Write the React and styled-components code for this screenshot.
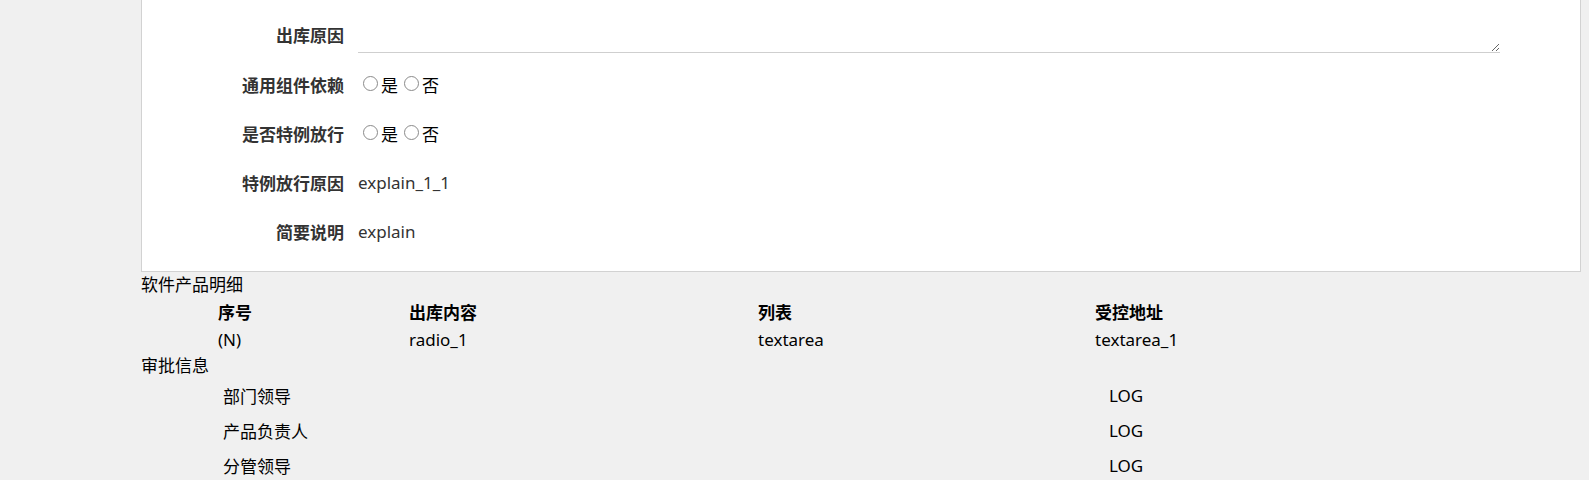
import styled, { createGlobalStyle } from "styled-components";

const GlobalStyle = createGlobalStyle`
  body {
    margin: 0;
    background: #f0f0f0;
    font-family: "Noto Sans", "Noto Sans CJK SC", sans-serif;
    font-size: 17px;
    color: #000;
  }
`;

const formRows = [
  { label: "通用组件依赖", type: "radio", name: "common" },
  { label: "是否特例放行", type: "radio", name: "special" },
  { label: "特例放行原因", type: "text", value: "explain_1_1" },
  { label: "简要说明", type: "text", value: "explain" },
];

const products = [{ no: "(N)", content: "radio_1", list: "textarea", addr: "textarea_1" }];

const approvals = ["部门领导", "产品负责人", "分管领导"];

function App() {
  return (
    <>
      <GlobalStyle />
      <Page>
        <Card>
          <Row $h={52}>
            <Label>出库原因</Label>
            <Reason />
          </Row>
          {formRows.map((r) => (
            <Row key={r.label} $h={49}>
              <Label>{r.label}</Label>
              {r.type === "radio" ? (
                <Radios>
                  <RadioItem>
                    <Radio type="radio" name={r.name} />是
                  </RadioItem>
                  <RadioItem>
                    <Radio type="radio" name={r.name} />否
                  </RadioItem>
                </Radios>
              ) : (
                <Value>{r.value}</Value>
              )}
            </Row>
          ))}
        </Card>

        <SectionTitle>软件产品明细</SectionTitle>
        <Table>
          <HeadCell>序号</HeadCell>
          <HeadCell>出库内容</HeadCell>
          <HeadCell>列表</HeadCell>
          <HeadCell>受控地址</HeadCell>
          {products.map((p) => [
            <Cell key="no">{p.no}</Cell>,
            <Cell key="c">{p.content}</Cell>,
            <Cell key="l">{p.list}</Cell>,
            <Cell key="a">{p.addr}</Cell>,
          ])}
        </Table>

        <SectionTitle>审批信息</SectionTitle>
        <Approvals>
          {approvals.map((a) => (
            <ApprovalRow key={a}>
              <span>{a}</span>
              <span>LOG</span>
            </ApprovalRow>
          ))}
        </Approvals>
      </Page>
    </>
  );
}

export default App;

const Page = styled.div`
  padding: 0 8px 0 141px;
`;

const Card = styled.div`
  background: #fff;
  border: 1px solid #d2d2d2;
  border-top: none;
  padding: 8px 0 15px;
`;

const Row = styled.div`
  display: flex;
  align-items: center;
  height: ${(p) => p.$h}px;
`;

const Label = styled.div`
  width: 202px;
  flex-shrink: 0;
  text-align: right;
  font-weight: bold;
  color: #333;
  margin-right: 14px;
`;

const Reason = styled.textarea`
  width: 1142px;
  height: 34px;
  box-sizing: border-box;
  border: none;
  border-bottom: 1px solid #cfcfcf;
  outline: none;
  resize: vertical;
  font: inherit;
  padding: 0;
  margin-top: 4px;
  background: transparent;
`;

const Radios = styled.div`
  display: flex;
  align-items: center;
`;

const RadioItem = styled.label`
  display: flex;
  align-items: center;
  margin-left: 5px;
  margin-right: 1px;
  color: #000;
`;

const Radio = styled.input`
  appearance: none;
  width: 15px;
  height: 15px;
  border: 1px solid #8a8a8a;
  border-radius: 50%;
  margin: 0 3px 3px 0;
  box-sizing: border-box;
  background: #fff;
`;

const Value = styled.div`
  color: #333;
`;

const SectionTitle = styled.div`
  height: 25px;
  line-height: 25px;
  color: #000;
`;

const Table = styled.div`
  display: grid;
  grid-template-columns: 191px 349px 337px 1fr;
  padding-left: 77px;
  grid-auto-rows: 28px;
  align-items: center;
`;

const HeadCell = styled.div`
  font-weight: bold;
`;

const Cell = styled.div``;

const Approvals = styled.div`
  padding-left: 82px;
`;

const ApprovalRow = styled.div`
  display: grid;
  grid-template-columns: 886px 1fr;
  height: 35px;
  align-items: center;
`;
